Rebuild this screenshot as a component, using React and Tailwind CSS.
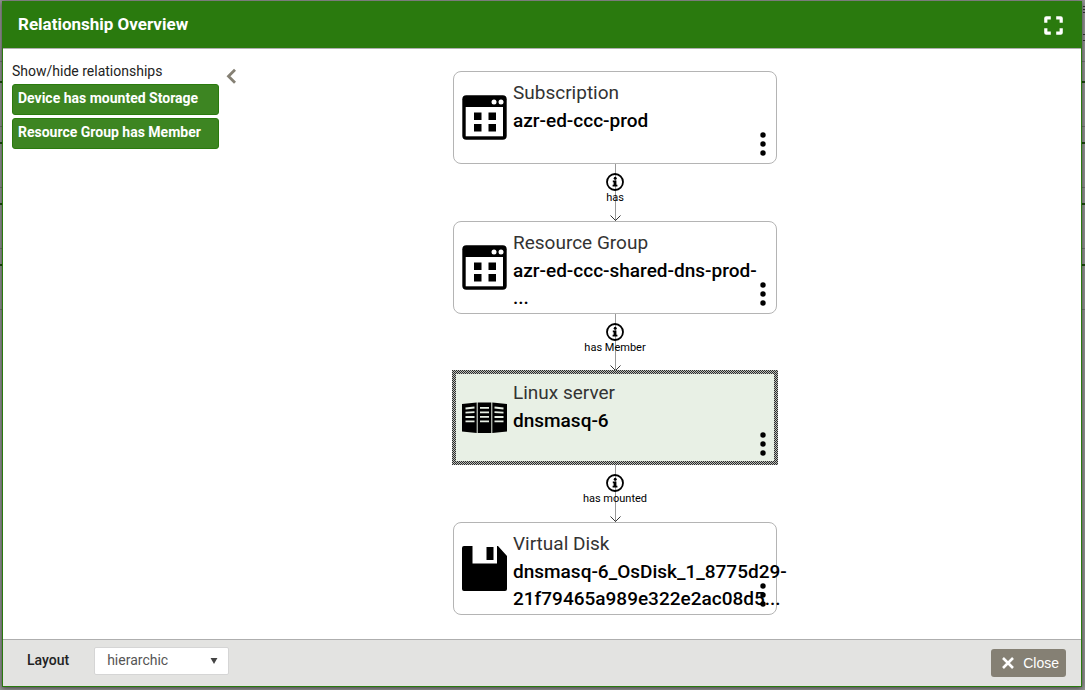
import React from "react";

const nodes = [
  { id: "sub", top: 0, icon: "app", type: "Subscription", lines: ["azr-ed-ccc-prod"] },
  { id: "rg", top: 150, icon: "app", type: "Resource Group", lines: ["azr-ed-ccc-shared-dns-prod-", "..."] },
  { id: "srv", top: 300, icon: "server", type: "Linux server", lines: ["dnsmasq-6"], selected: true },
  { id: "disk", top: 451, icon: "disk", type: "Virtual Disk", lines: ["dnsmasq-6_OsDisk_1_8775d29-", "21f79465a989e322e2ac08d5..."] },
];

const edges = [
  { id: "e1", top: 93, label: "has" },
  { id: "e2", top: 243, label: "has Member" },
  { id: "e3", top: 394, label: "has mounted" },
];

const backdropRows = [
  { y: 61, strong: false },
  { y: 81, strong: true },
  { y: 126, strong: false },
  { y: 142, strong: true },
  { y: 187, strong: false },
  { y: 203, strong: true },
  { y: 248, strong: false },
  { y: 264, strong: true },
  { y: 309, strong: false },
];

const backdropMarks = [6, 9, 12, 34, 40];

function AppIcon() {
  return (
    <svg viewBox="0 0 45 45" className="h-[45px] w-[45px]" aria-hidden="true">
      <rect x="0.300" y="0.300" width="44.400" height="44.400" rx="4" />
      <rect x="3.700" y="12" width="37.300" height="29.300" fill="#fff" />
      <circle cx="32" cy="7" r="2.500" fill="#fff" />
      <circle cx="39" cy="7" r="2.500" fill="#fff" />
      <path d="M12 17.500h7.500v7.500h-7.500zM26.500 17.500h7.500v7.500h-7.500zM12 29h7.500v7.500h-7.500zM26.500 29h7.500v7.500h-7.500z" />
    </svg>
  );
}

function ServerIcon() {
  return (
    <svg viewBox="0 0 45 45" className="h-[45px] w-[45px]" aria-hidden="true">
      <path d="M0 9L14.700 7.500V38L0 36.500zM15.700 7.500H29.300V38H15.700zM30.300 7.500L45 9V36.500L30.300 38z" />
      <path
        d="M3.500 13.500l9-1M3.500 17.700l9-.5M3.500 22h9M3.500 26.300h9M18 12.800h9M18 17.300h9M18 21.800h9M18 26.300h9M32.500 12.500l9 1M32.500 17.200l9 .5M32.500 22h9M32.500 26.300h9"
        stroke="#e8f0e5"
        strokeWidth="1.800"
        fill="none"
      />
    </svg>
  );
}

function DiskIcon() {
  return (
    <svg viewBox="0 0 45 45" className="h-[45px] w-[45px]" aria-hidden="true">
      <path d="M2 0H10.500V17.500H35V0H36L45 10V43a2 2 0 0 1-2 2H2a2 2 0 0 1-2-2V2a2 2 0 0 1 2-2z" />
      <path d="M24.500 1H31.500V14H24.500z" />
    </svg>
  );
}

const icons = { app: AppIcon, server: ServerIcon, disk: DiskIcon };

function Node({ node }) {
  const Icon = icons[node.icon];
  return (
    <article
      className={
        node.selected
          ? "absolute left-0 flex h-[93px] w-full border border-transparent bg-[#e8f0e5]"
          : "absolute left-0 flex h-[93px] w-full rounded-lg border border-[#b4b4b4] bg-white"
      }
      style={{ top: node.top }}
    >
      {node.selected && (
        <svg className="absolute -inset-[2px] h-[95px] w-[326px]" aria-hidden="true">
          <defs>
            <pattern id="hatch" width="2" height="2" patternUnits="userSpaceOnUse">
              <rect width="2" height="2" fill="#bcbfba" />
              <rect width="1" height="1" fill="#2a2a2a" />
              <rect x="1" y="1" width="1" height="1" fill="#2a2a2a" />
            </pattern>
          </defs>
          <path
            d="M0 0H326V95H0zM4 4V91H322V4z"
            fillRule="evenodd"
            fill="url(#hatch)"
            shapeRendering="crispEdges"
          />
        </svg>
      )}
      <div className="flex items-center pl-[8px]">
        <Icon />
      </div>
      <div className="pt-[7px] pl-[6px]">
        <p className="text-[19px] leading-[28px] font-normal whitespace-nowrap text-[#333]">{node.type}</p>
        {node.lines.map((line) => (
          <p key={line} className="text-[19px] leading-[27px] font-medium whitespace-nowrap text-black">
            {line}
          </p>
        ))}
      </div>
      <button type="button" aria-label="Node actions" className="absolute right-[8px] bottom-[7px]">
        <svg viewBox="0 0 10 24" className="h-[24px] w-[10px]" aria-hidden="true">
          <circle cx="5" cy="3" r="2.700" />
          <circle cx="5" cy="12" r="2.700" />
          <circle cx="5" cy="21" r="2.700" />
        </svg>
      </button>
    </article>
  );
}

function Edge({ edge }) {
  return (
    <div className="absolute left-0 flex h-[57px] w-full flex-col items-center pt-[9px]" style={{ top: edge.top }}>
      <svg viewBox="0 0 12 57" className="absolute top-0 h-[57px] w-[12px]" fill="none" stroke="#777" aria-hidden="true">
        <path d="M6.500 0V57" stroke="#999" />
        <path d="M1.500 51.500L6.500 56.500L11.500 51.500" stroke="#333" />
      </svg>
      <button type="button" aria-label="Relationship information" className="relative">
        <svg viewBox="0 0 18 18" className="h-[18px] w-[18px]" aria-hidden="true">
          <circle cx="9" cy="9" r="8" fill="none" stroke="#000" strokeWidth="1.800" />
          <circle cx="9.200" cy="5.300" r="1.500" />
          <path d="M6.800 7.500h3.600v4.300h1v1.800H6.600v-1.800h1V9.200h-.8z" />
        </svg>
      </button>
      <span className="relative text-[11px] leading-[13px] text-black">{edge.label}</span>
    </div>
  );
}

export default function App() {
  return (
    <div className="relative flex h-screen flex-col overflow-hidden bg-[#959595] pt-px pr-[3px] pb-[3px] pl-[2px] font-[Roboto,sans-serif]">
      <div aria-hidden="true">
        {backdropRows.map((row) => (
          <div
            key={row.y}
            className={row.strong ? "absolute left-0 h-[2px] w-full bg-[#1d4a10]" : "absolute left-0 h-px w-full bg-[#757575]"}
            style={{ top: row.y }}
          />
        ))}
        {backdropMarks.map((y) => (
          <div key={y} className="absolute right-0 h-px w-[2px] bg-[#333]" style={{ top: y }} />
        ))}
      </div>
      <section
        aria-labelledby="title"
        className="relative flex min-h-0 flex-1 flex-col border border-[#2a7a0e] bg-white shadow-[0_1px_5px_rgba(0,0,0,0.6)]"
      >
        <header className="flex h-[47px] shrink-0 items-center justify-between border-b border-[#b0b0b0] bg-[#2a7a0e] pr-[18px] pl-[15px] text-white">
          <h1 id="title" className="pb-[2px] text-[17px] leading-[24px] font-bold">
            Relationship Overview
          </h1>
          <button type="button" aria-label="Full screen">
            <svg viewBox="0 0 19 19" className="h-[19px] w-[19px]" fill="none" stroke="#fff" strokeWidth="3.200" aria-hidden="true">
              <path d="M1.800 6.800V2.300a.5.5 0 0 1 .5-.5H6.800M12.200 1.800h4.500a.5.5 0 0 1 .5.5V6.800M17.200 12.200v4.500a.5.5 0 0 1-.5.5H12.200M6.800 17.200H2.300a.5.5 0 0 1-.5-.5V12.200" />
            </svg>
          </button>
        </header>

        <main className="flex min-h-0 flex-1">
          <aside className="flex shrink-0 items-start gap-[7px] pt-[12px] pl-[9px]">
            <div className="flex w-[207px] flex-col gap-[2px]">
              <h2 className="text-[14px] leading-[21px] text-[#222]">Show/hide relationships</h2>
              <div className="flex flex-col gap-[3px]">
                {["Device has mounted Storage", "Resource Group has Member"].map((label) => (
                  <button
                    key={label}
                    type="button"
                    aria-pressed="true"
                    className="h-[31px] rounded-[3px] border border-[#2a7a0e] bg-[#3d8522] px-[5px] pb-[3px] text-left text-[14px] leading-[20px] font-bold whitespace-nowrap text-white"
                  >
                    {label}
                  </button>
                ))}
              </div>
            </div>
            <button type="button" aria-label="Collapse panel" className="mt-[7px]">
              <svg viewBox="0 0 11 16" className="h-[16px] w-[11px]" fill="none" stroke="#858074" strokeWidth="2.800" aria-hidden="true">
                <path d="M9 1.800L2.500 8.300L9 14.800" />
              </svg>
            </button>
          </aside>
          <div className="flex flex-1 justify-center pt-[22px] pr-[88px]">
            <div className="relative w-[324px]">
              {edges.map((edge) => (
                <Edge key={edge.id} edge={edge} />
              ))}
              {nodes.map((node) => (
                <Node key={node.id} node={node} />
              ))}
            </div>
          </div>
        </main>

        <footer className="flex h-[47px] shrink-0 items-center justify-between border-t border-[#aeaeae] bg-[#e3e3e1] pr-[15px] pl-[24px]">
          <div className="flex items-center gap-[25px] pb-[4px]">
            <label htmlFor="layout" className="pb-[2px] text-[14px] leading-[20px] font-medium text-[#222]">
              Layout
            </label>
            <div className="relative flex items-center">
              <select
                id="layout"
                defaultValue="hierarchic"
                className="h-[28px] w-[135px] appearance-none rounded-[2px] border border-[#d5d5d5] bg-white pb-[2px] pl-[12px] text-[14px] leading-[20px] text-[#555]"
              >
                <option value="hierarchic">hierarchic</option>
                <option value="organic">organic</option>
                <option value="circular">circular</option>
              </select>
              <svg viewBox="0 0 8 7" className="pointer-events-none absolute right-[11px] h-[7px] w-[8px] pb-px" fill="#444" aria-hidden="true">
                <path d="M0 0H8L4 7z" />
              </svg>
            </div>
          </div>
          <button
            type="button"
            className="flex h-[28px] items-center gap-[9px] rounded-[3px] bg-[#858074] pr-[7px] pl-[11px] font-['Liberation_Sans',sans-serif] text-[14px] leading-[20px] text-white"
          >
            <svg viewBox="0 0 12 12" className="h-[12px] w-[12px]" fill="none" stroke="#fff" strokeWidth="2.600" aria-hidden="true">
              <path d="M1 1L11 11M11 1L1 11" />
            </svg>
            Close
          </button>
        </footer>
      </section>
    </div>
  );
}
